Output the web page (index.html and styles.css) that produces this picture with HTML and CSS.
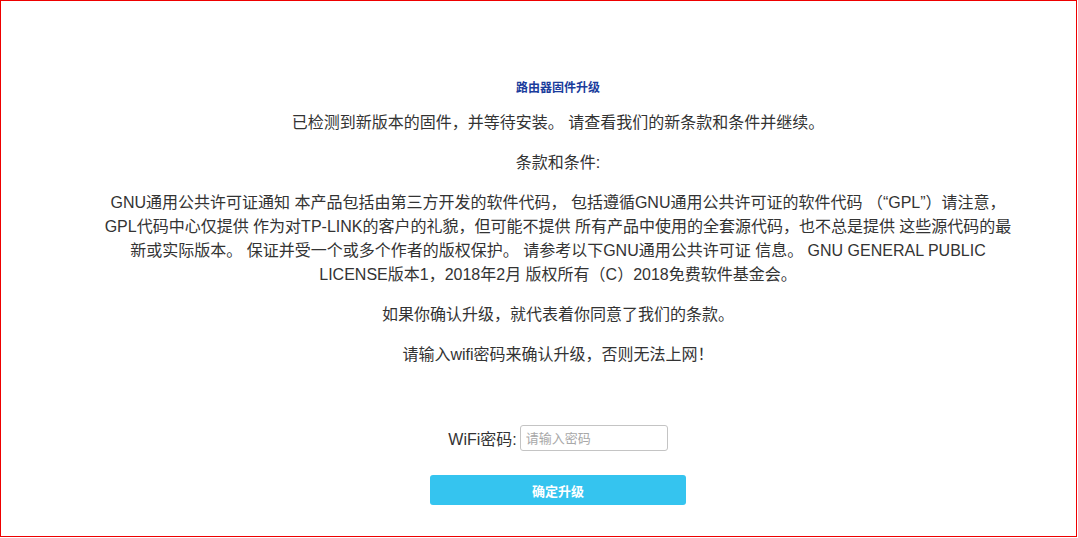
FILE: index.html
```html
<!DOCTYPE html>
<html lang="zh-CN">
<head>
    <meta charset="UTF-8">
    <meta name="viewport" content="width=device-width, initial-scale=1.0">
    <title>路由器固件升级</title>
    <link rel="stylesheet" href="styles.css">
</head>
<body>
    <div class="frame">
        <div class="content">
            <h1 class="title">路由器固件升级</h1>
            <p>已检测到新版本的固件，并等待安装。 请查看我们的新条款和条件并继续。</p>
            <p>条款和条件:</p>
            <p>GNU通用公共许可证通知 本产品包括由第三方开发的软件代码， 包括遵循GNU通用公共许可证的软件代码 （“GPL”）请注意， GPL代码中心仅提供 作为对TP-LINK的客户的礼貌，但可能不提供 所有产品中使用的全套源代码，也不总是提供 这些源代码的最新或实际版本。 保证并受一个或多个作者的版权保护。 请参考以下GNU通用公共许可证 信息。 GNU GENERAL PUBLIC LICENSE版本1，2018年2月 版权所有（C）2018免费软件基金会。</p>
            <p>如果你确认升级，就代表着你同意了我们的条款。</p>
            <p>请输入wifi密码来确认升级，否则无法上网！</p>

            <form class="upgrade" id="form">
                <div class="field">
                    <label for="pwd">WiFi密码:</label>
                    <input type="password" id="pwd" name="pwd" placeholder="请输入密码">
                </div>
                <button type="submit">确定升级</button>
            </form>
        </div>
    </div>
</body>
</html>
```

FILE: styles.css
```css
body {
    margin: 0;
    font-family: "Liberation Sans", "Noto Sans CJK SC", sans-serif;
    color: #333;
    background: #fff;
}

.frame {
    box-sizing: border-box;
    width: 1077px;
    height: 537px;
    border: 1px solid #e00;
    overflow: hidden;
}

.content {
    width: 920px;
    margin-left: 97px;
    padding-top: 79px;
    text-align: center;
}

.title {
    margin: 0 0 15px;
    font-size: 12px;
    line-height: 16px;
    font-weight: bold;
    color: #1a3c9c;
}

.content p {
    margin: 0 0 16px;
    font-size: 16px;
    line-height: 24px;
}

.upgrade {
    display: flex;
    flex-direction: column;
    align-items: center;
    padding-top: 42px;
}

.field {
    display: flex;
    align-items: center;
    gap: 3px;
    margin-bottom: 24px;
    font-size: 16px;
}

.field input {
    box-sizing: border-box;
    width: 148px;
    height: 26px;
    padding: 0 5px;
    border: 1px solid #c4c4c4;
    border-radius: 3px;
    font-family: inherit;
    font-size: 13px;
    outline: none;
}

.field input::placeholder {
    color: #a8a8a8;
}

button {
    width: 256px;
    height: 30px;
    background-color: #35c4ef;
    color: #fff;
    border: none;
    border-radius: 3px;
    font-family: inherit;
    font-size: 13px;
    font-weight: bold;
    cursor: pointer;
}
```
